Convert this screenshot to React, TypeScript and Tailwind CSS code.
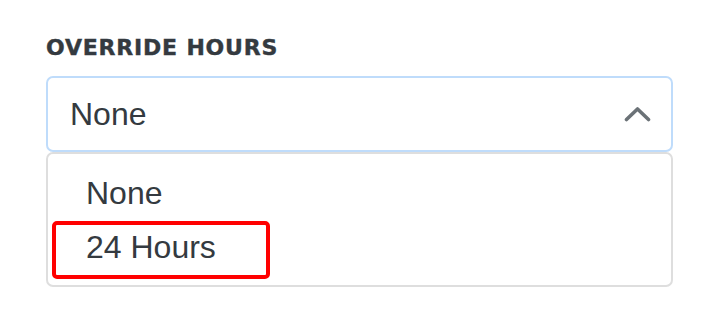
import React from 'react';

// ---------------------------------------------------------------------------
// Data
// ---------------------------------------------------------------------------

const options = ['None', '24 Hours'];

// ---------------------------------------------------------------------------
// Icons
// ---------------------------------------------------------------------------

function ChevronUp() {
  return (
    <svg width="27" height="16" viewBox="0 0 27 16" fill="none" aria-hidden>
      <polyline
        points="2.5,13.5 13.5,3 24.5,13.5"
        stroke="#6b7277"
        strokeWidth="3.6"
        strokeLinecap="round"
        strokeLinejoin="round"
      />
    </svg>
  );
}

// ---------------------------------------------------------------------------
// Component
// ---------------------------------------------------------------------------

export default function App() {
  const selected = options[0];

  return (
    <div className="w-[722px] h-[320px] bg-white pl-[46px] pr-[49px] pt-[35px] text-[#343a40]">
      {/* Label */}
      <label className="block font-['DejaVu_Sans',sans-serif] font-bold text-[22px] leading-[26px] tracking-[0.8px] text-[#343a40] [-webkit-text-stroke:0.4px_#343a40]">
        OVERRIDE HOURS
      </label>

      {/* Select trigger */}
      <div className="mt-[15px] flex h-[76px] items-center justify-between rounded-[7px] border-2 border-[#bfdcfb] pl-[22px] pr-[20px]">
        <span className="font-['Liberation_Sans',Arial,sans-serif] text-[32px] leading-[36px]">
          {selected}
        </span>
        <ChevronUp />
      </div>

      {/* Options menu */}
      <div className="relative rounded-[7px] border-2 border-[#dedede] pt-[12px] pb-[11px]">
        <ul className="font-['Liberation_Sans',Arial,sans-serif] text-[32px] leading-[36px]">
          {options.map(option => (
            <li key={option} className="flex h-[54px] items-center pl-[38px]">
              {option}
            </li>
          ))}
        </ul>

        {/* Highlight annotation */}
        <div className="absolute left-[4px] top-[67px] h-[58px] w-[218px] rounded-[5px] border-4 border-[#ff0000]" />
      </div>
    </div>
  );
}
